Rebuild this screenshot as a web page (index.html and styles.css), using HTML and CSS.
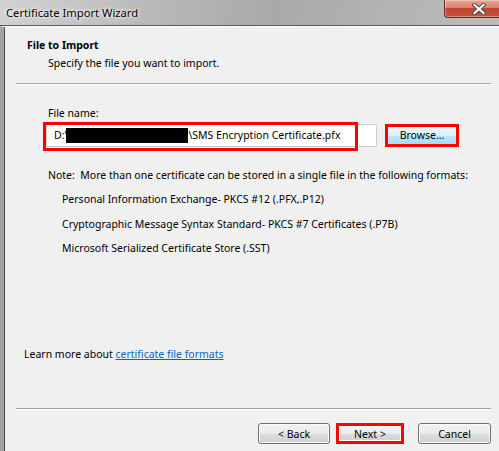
FILE: index.html
```html
<!DOCTYPE html>
<html lang="en">
<head>
  <meta charset="UTF-8">
  <title>Certificate Import Wizard</title>
  <link rel="stylesheet" href="styles.css">
</head>
<body>
  <div class="window">
    <div class="titlebar">
      <span class="title">Certificate Import Wizard</span>
      <div class="close">
        <svg width="18" height="12" viewBox="0 0 18 12">
          <path d="M4.5 2 L13.5 10 M13.5 2 L4.5 10" stroke="#4a4a4a" stroke-width="4.2" stroke-linecap="square"/>
          <path d="M4.5 2 L13.5 10 M13.5 2 L4.5 10" stroke="#ffffff" stroke-width="2.2" stroke-linecap="square"/>
        </svg>
      </div>
    </div>
    <div class="frame">
      <div class="header">
        <div class="heading">File to Import</div>
        <div class="subheading">Specify the file you want to import.</div>
      </div>
      <div class="content">
        <div class="field-label">File name:</div>
        <div class="file-row">
          <div class="file-input">
            <span class="path">D:\</span><span class="redact"></span><span class="path">\SMS Encryption Certificate.pfx</span>
            <div class="annot"></div>
          </div>
          <button class="btn browse">Browse...</button>
        </div>
        <p class="note">Note:&nbsp; More than one certificate can be stored in a single file in the following formats:</p>
        <ul class="formats">
          <li>Personal Information Exchange- PKCS #12 (.PFX,.P12)</li>
          <li>Cryptographic Message Syntax Standard- PKCS #7 Certificates (.P7B)</li>
          <li>Microsoft Serialized Certificate Store (.SST)</li>
        </ul>
        <p class="learn">Learn more about <a href="#">certificate file formats</a></p>
      </div>
      <div class="footer">
        <button class="btn back">&lt; Back</button>
        <button class="btn next">Next &gt;</button>
        <button class="btn cancel">Cancel</button>
      </div>
    </div>
  </div>
</body>
</html>
```

FILE: styles.css
```css
body {
  margin: 0;
  font-family: 'Noto Sans', sans-serif;
  font-size: 10.5px;
  color: #000;
}
.window {
  width: 499px;
  height: 451px;
  display: flex;
  flex-direction: column;
  background: #b4b4b4;
  overflow: hidden;
}
.titlebar {
  height: 25px;
  flex-shrink: 0;
  display: flex;
  justify-content: space-between;
  align-items: flex-start;
  background: linear-gradient(100deg, #d2d2d2 0%, #b9b9b9 30%, #a9a9a9 55%, #b2b2b2 75%, #bdbdbd 100%);
  border-bottom: 1px solid #5a5a5a;
}
.title {
  margin: 5px 0 0 6px;
  font-size: 11.2px;
  color: #000;
  text-shadow: 0 0 6px #fff, 0 0 3px #fff;
}
.close {
  width: 68px;
  height: 17px;
  margin-right: -15px;
  display: flex;
  align-items: center;
  justify-content: center;
  border: 1px solid #6b2b22;
  border-top: none;
  border-radius: 0 0 0 4px;
  background: linear-gradient(#e9a595 0%, #d9826f 45%, #c0432e 50%, #c4533c 100%);
  box-shadow: inset 0 0 0 1px rgba(255, 255, 255, 0.35);
}
.frame {
  flex: 1;
  display: flex;
  flex-direction: column;
  min-height: 0;
  background: #f0f0f0;
  border-left: 4px solid #a4a4a4;
  border-top: 1px solid #fff;
  box-shadow: inset 1px 0 0 #4c4c4c;
  padding-left: 1px;
}
.header {
  margin: 0 8px 0 11px;
  padding: 11px 0 12px 11px;
  line-height: 15px;
  border-bottom: 1px solid #a0a0a0;
  box-shadow: 0 1px 0 #fff;
}
.heading {
  font-weight: bold;
}
.subheading {
  margin-top: 3px;
  margin-left: 21px;
}
.content {
  flex: 1;
  display: flex;
  flex-direction: column;
  padding: 22px 8px 0 43px;
  line-height: 15px;
}
.field-label {
  height: 15px;
}
.file-row {
  display: flex;
  align-items: center;
  margin-top: 2px;
}
.file-input {
  position: relative;
  width: 331px;
  height: 23px;
  margin-left: -2px;
  margin-top: 1px;
  padding-left: 7px;
  display: flex;
  align-items: center;
  background: #fff;
  border: 1px solid #c9ccd1;
  border-radius: 2px;
  box-sizing: border-box;
  white-space: pre;
}
.redact {
  display: inline-block;
  width: 122px;
  height: 15px;
  margin-left: -2px;
  background: #000;
}
.annot {
  position: absolute;
  left: -4px;
  top: -3px;
  width: 309px;
  height: 23px;
  border: 3px solid #ff0000;
}
.btn {
  font-family: 'Noto Sans', sans-serif;
  font-size: 10.5px;
  color: #000;
  width: 73px;
  height: 21px;
  padding: 0;
  border: 1px solid #707070;
  border-radius: 3px;
  background: linear-gradient(#f2f2f2 0%, #ebebeb 50%, #dddddd 51%, #cfcfcf 100%);
  box-shadow: inset 0 0 0 1px #fcfcfc;
}
.browse {
  width: 74px;
  height: 23px;
  margin-left: 8px;
  border: 3px solid #ff0000;
  border-radius: 0;
  background: linear-gradient(#eaf6fd 0%, #d9f0fc 50%, #bee6fd 51%, #a7d9f5 100%);
  box-shadow: none;
}
.note {
  margin: 21px 0 0 0;
}
.formats {
  list-style: none;
  margin: 9px 0 0 0;
  padding-left: 14px;
}
.formats li {
  margin-bottom: 9.5px;
}
.learn {
  margin: auto 0 46px -24px;
}
.learn a {
  color: #0066cc;
}
.footer {
  flex-shrink: 0;
  display: flex;
  justify-content: flex-end;
  margin: 0 8px 0 11px;
  padding-top: 14px;
  height: 43px;
  box-sizing: border-box;
  border-top: 1px solid #a0a0a0;
  box-shadow: inset 0 1px 0 #fff;
}
.back {
  width: 72px;
}
.next {
  width: 68px;
  margin-left: 6px;
  border: 3px solid #ff0000;
  border-radius: 0;
}
.cancel {
  margin-left: 14px;
}
```
